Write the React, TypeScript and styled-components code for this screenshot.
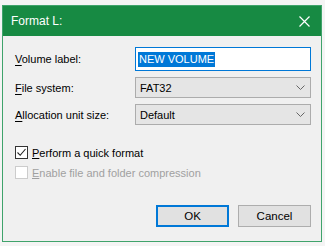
import React from "react";
import styled, { createGlobalStyle } from "styled-components";

const Global = createGlobalStyle`
  html, body { margin: 0; padding: 0; background: #f4f4f4; }
  body { font-family: "Liberation Sans", Arial, sans-serif; font-size: 11px; color: #000; }
  * { box-sizing: border-box; }
`;

const Window = styled.div`
  margin: 5px 0 0 2px;
  width: 320px;
  height: 237px;
  border: 1px solid #3fa36b;
  background: #f0f0f0;
  display: flex;
  flex-direction: column;
`;

const TitleBar = styled.div`
  height: 30px;
  background: #178a43;
  color: #fff;
  display: flex;
  align-items: center;
  justify-content: space-between;
  padding: 0 11px 0 8px;
  font-size: 12px;
  flex: none;
`;

const Body = styled.div`
  flex: 1;
  padding: 11px 10px 0 12px;
  display: flex;
  flex-direction: column;
`;

const Form = styled.div`
  display: grid;
  grid-template-columns: 120px 1fr;
  row-gap: 6px;
  align-items: center;
`;

const Label = styled.span`
  font-size: 11px;
  u { text-decoration: underline; text-underline-offset: 2px; }
`;

const TextBox = styled.div`
  height: 24px;
  border: 1px solid #0078d7;
  background: #fff;
  display: flex;
  align-items: center;
  padding-left: 2px;
`;

const Selected = styled.span`
  background: #0078d7;
  color: #fff;
  font-size: 11px;
  line-height: 15px;
  padding: 0 1px;
`;

const Combo = styled.div`
  height: 21px;
  border: 1px solid #acacac;
  background: #e5e5e5;
  display: flex;
  align-items: center;
  justify-content: space-between;
  padding: 0 5px 0 4px;
  font-size: 11px;
`;

const Checks = styled.div`
  margin-top: 21px;
  display: flex;
  flex-direction: column;
  gap: 7px;
`;

const CheckRow = styled.div<{ $disabled?: boolean }>`
  display: flex;
  align-items: center;
  gap: 4px;
  font-size: 11px;
  color: ${(p) => (p.$disabled ? "#a0a0a0" : "#000")};
`;

const Box = styled.span<{ $disabled?: boolean }>`
  width: 13px;
  height: 13px;
  border: 1px solid ${(p) => (p.$disabled ? "#cccccc" : "#333")};
  background: #fff;
  display: flex;
  align-items: center;
  justify-content: center;
`;

const Buttons = styled.div`
  margin-top: auto;
  margin-bottom: 14px;
  display: flex;
  justify-content: flex-end;
  gap: 9px;
`;

const Button = styled.button<{ $default?: boolean }>`
  width: 73px;
  height: 22px;
  font-family: inherit;
  font-size: 11.5px;
  background: #e1e1e1;
  border: ${(p) => (p.$default ? "2px solid #0078d7" : "1px solid #adadad")};
  padding: 0;
  color: #000;
`;

const Chevron = () => (
  <svg width="9" height="6" viewBox="0 0 9 6">
    <path d="M0.5 0.5 L4.5 4.5 L8.5 0.5" fill="none" stroke="#666" strokeWidth="1" />
  </svg>
);

export default function App() {
  return (
    <>
      <Global />
      <Window>
        <TitleBar>
          <span>Format L:</span>
          <svg width="11" height="11" viewBox="0 0 11 11">
            <path d="M0.5 0.5 L10.5 10.5 M10.5 0.5 L0.5 10.5" stroke="#fff" strokeWidth="1.2" />
          </svg>
        </TitleBar>
        <Body>
          <Form>
            <Label><u>V</u>olume label:</Label>
            <TextBox><Selected>NEW VOLUME</Selected></TextBox>
            <Label><u>F</u>ile system:</Label>
            <Combo><span>FAT32</span><Chevron /></Combo>
            <Label><u>A</u>llocation unit size:</Label>
            <Combo><span>Default</span><Chevron /></Combo>
          </Form>
          <Checks>
            <CheckRow>
              <Box>
                <svg width="11" height="11" viewBox="0 0 11 11">
                  <path d="M1.5 5.5 L4.2 8.3 L9.5 2" fill="none" stroke="#222" strokeWidth="1.1" />
                </svg>
              </Box>
              <span><u>P</u>erform a quick format</span>
            </CheckRow>
            <CheckRow $disabled>
              <Box $disabled />
              <span><u>E</u>nable file and folder compression</span>
            </CheckRow>
          </Checks>
          <Buttons>
            <Button $default>OK</Button>
            <Button>Cancel</Button>
          </Buttons>
        </Body>
      </Window>
    </>
  );
}
